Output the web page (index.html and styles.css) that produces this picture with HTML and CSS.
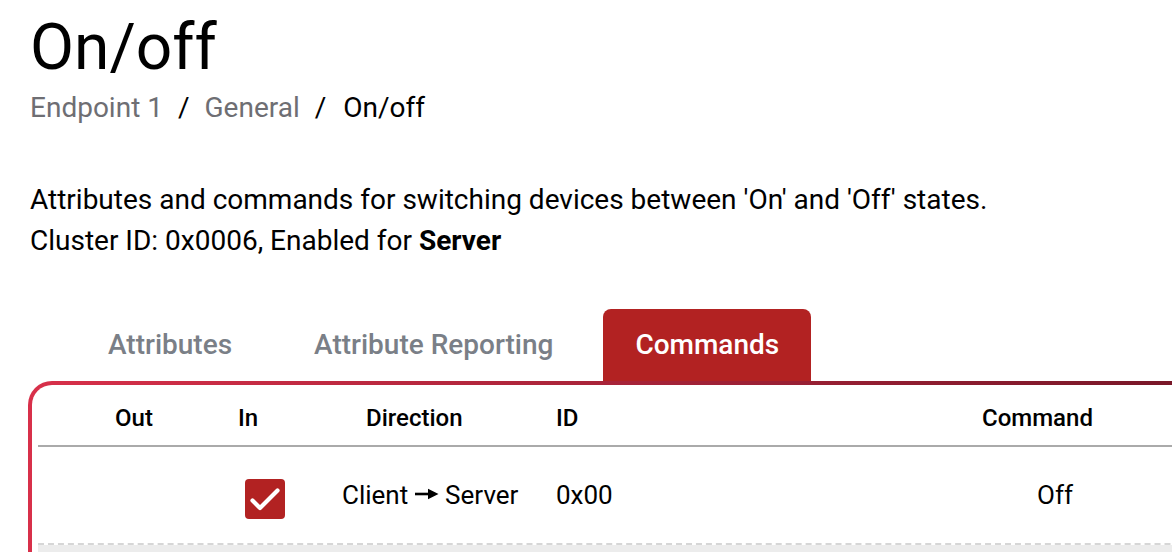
FILE: index.html
```html
<!DOCTYPE html>
<html>
<head>
<meta charset="utf-8">
<link rel="stylesheet" href="styles.css">
</head>
<body>
<div class="page">
  <h1 class="title">On/off</h1>
  <div class="crumbs">
    <span class="crumb">Endpoint 1</span>
    <span class="sep">/</span>
    <span class="crumb">General</span>
    <span class="sep">/</span>
    <span class="crumb current">On/off</span>
  </div>
  <div class="desc">
    <div>Attributes and commands for switching devices between 'On' and 'Off' states.</div>
    <div>Cluster ID: 0x0006, Enabled for <b>Server</b></div>
  </div>
  <div class="tabs">
    <div class="tab">Attributes</div>
    <div class="tab">Attribute Reporting</div>
    <div class="tab active">Commands</div>
  </div>
  <div class="card">
    <div class="card-inner">
      <div class="row head">
        <div class="c c-out">Out</div>
        <div class="c c-in">In</div>
        <div class="c c-dir">Direction</div>
        <div class="c c-id">ID</div>
        <div class="c c-cmd">Command</div>
      </div>
      <div class="row data">
        <div class="c c-out"></div>
        <div class="c c-in">
          <span class="check">
            <svg width="40" height="40" viewBox="0 0 40 40"><polyline points="7.5,21.5 15,29 32.5,11.5" fill="none" stroke="#fff" stroke-width="4.2" stroke-linecap="round" stroke-linejoin="round"/></svg>
          </span>
        </div>
        <div class="c c-dir">Client <svg class="arrow" width="24" height="14" viewBox="0 0 24 14"><line x1="0" y1="7" x2="15" y2="7" stroke="#000" stroke-width="2.6"/><polygon points="13,1.8 23.5,7 13,12.2" fill="#000"/></svg> Server</div>
        <div class="c c-id">0x00</div>
        <div class="c c-cmd">Off</div>
      </div>
      <div class="row next"></div>
    </div>
  </div>
</div>
</body>
</html>
```
FILE: styles.css
```css
html, body {
  margin: 0;
  padding: 0;
  background: #fff;
  overflow: hidden;
}
body {
  font-family: Roboto, "Liberation Sans", sans-serif;
  color: #000;
}
.page {
  padding-left: 30px;
  width: 1300px;
}
.title {
  margin: 9px 0 0;
  font-size: 64px;
  font-weight: 400;
  line-height: 78px;
}
.crumbs {
  margin-top: 0;
  font-size: 28px;
  line-height: 42px;
  display: flex;
}
.crumb { color: #6e6e73; }
.crumb.current { color: #000; }
.sep { margin: 0 15px; color: #000; }
.sep + .crumb.current { margin-left: 2px; }
.desc {
  margin-top: 50px;
  font-size: 28px;
  line-height: 41px;
}
.desc b { font-weight: 700; }
.tabs {
  margin-top: 48px;
  margin-left: 46px;
  display: flex;
  gap: 18px;
}
.tab {
  font-size: 28px;
  font-weight: 500;
  line-height: 72px;
  padding: 0 32px;
  color: #7a7f87;
  border-radius: 8px 8px 0 0;
}
.tab.active {
  background: #b22222;
  color: #fff;
}
.card {
  margin-left: -2px;
  background: linear-gradient(to right, #d8304a, #6c1424);
  padding: 4px 0 0 4px;
  border-top-left-radius: 24px;
}
.card-inner {
  background: #fff;
  border-top-left-radius: 20px;
  padding-left: 6px;
  height: 200px;
}
.row {
  display: grid;
  grid-template-columns: 192px 100px 210px 360px 400px;
}
.head {
  font-size: 24px;
  font-weight: 500;
  line-height: 54px;
  padding-top: 6px;
  border-bottom: 2px solid #aaaaaa;
}
.data {
  height: 96px;
  align-items: center;
  font-size: 26px;
  line-height: 30px;
  border-bottom: 2px dashed #d6d6d6;
}
.next {
  height: 40px;
  background: #ececec;
}
.c-out { text-align: center; }
.head .c-in { padding-left: 8px; }
.data .c-in { padding-left: 15px; }
.head .c-dir { padding-left: 36px; }
.data .c-dir { padding-left: 12px; white-space: nowrap; }
.c-id { padding-left: 16px; }
.head .c-cmd { padding-left: 82px; }
.data .c-cmd { padding-left: 137px; }
.arrow { vertical-align: 3px; }
.check {
  display: block;
  width: 40px;
  height: 40px;
  margin-top: 8px;
  background: #b22222;
  border-radius: 4px;
}
.check svg { display: block; }
```
